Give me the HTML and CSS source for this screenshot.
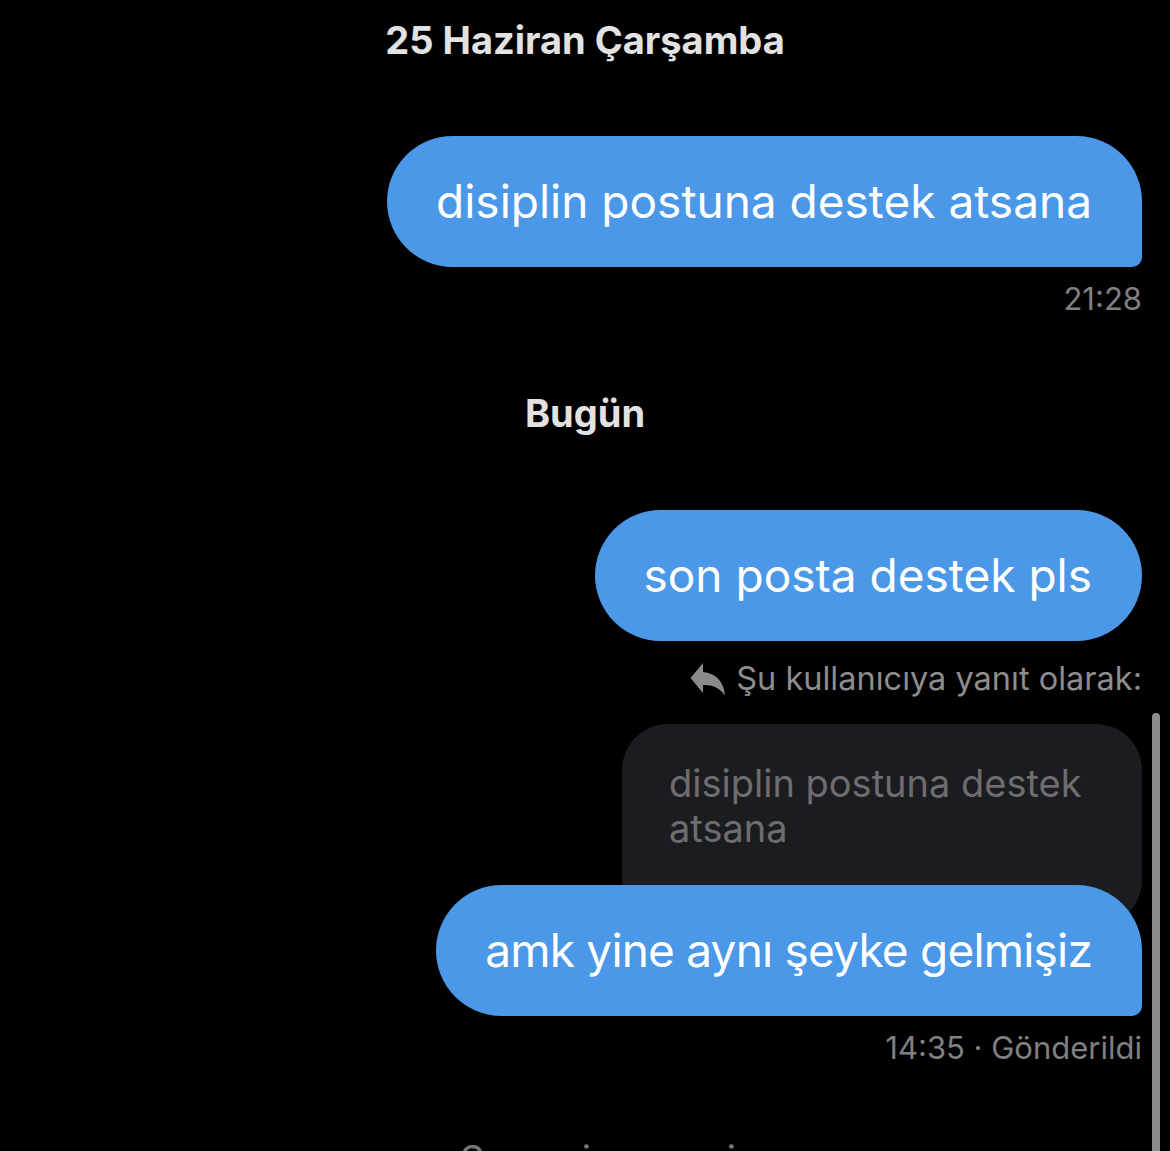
FILE: index.html
```html
<!DOCTYPE html>
<html>
  <head>
    <meta charset="UTF-8" />
    <meta name="viewport" content="width=device-width, initial-scale=1.0" />
    <title>Mesajlar</title>
    <link rel="stylesheet" href="styles.css">
  </head>
  <body>
    <div class="thread">
      <div class="day day-first">25 Haziran Çarşamba</div>

      <div class="msg">
        <div class="bubble tail">disiplin postuna destek atsana</div>
        <div class="meta">21:28</div>
      </div>

      <div class="day day-today">Bugün</div>

      <div class="msg">
        <div class="bubble">son posta destek pls</div>
        <div class="reply-label">
          <svg class="reply-icon" viewBox="0 0 36 34" width="36" height="34">
            <path d="M13 1 L0.5 16 L13 31 V23 C21 22.5 29 25 35 33.5 C34 20 26 11 13 10 Z" fill="#8a8a8a" />
          </svg>
          <span>Şu kullanıcıya yanıt olarak:</span>
        </div>
        <div class="quote">disiplin postuna destek atsana</div>
        <div class="bubble tail over">amk yine aynı şeyke gelmişiz</div>
        <div class="meta">14:35 · Gönderildi</div>
      </div>

      <div class="footer-hint">Seven ise sevsin</div>
    </div>
    <div class="scrollbar"></div>
  </body>
</html>
```

FILE: styles.css
```css
html, body {
  margin: 0;
  background: #000;
  height: 100%;
  overflow: hidden;
}
body {
  font-family: Inter, 'Noto Sans', sans-serif;
  position: relative;
}
.day {
  text-align: center;
  color: #e2e2e2;
  font-weight: 700;
  font-size: 38px;
  line-height: 46px;
}
.day-first {
  padding-top: 17px;
}
.day-today {
  margin-top: 71px;
  font-size: 38px;
}
.msg {
  display: flex;
  flex-direction: column;
  align-items: flex-end;
  padding-right: 28px;
}
.day-first + .msg {
  margin-top: 73px;
}
.day-today + .msg {
  margin-top: 74px;
}
.bubble {
  background: #4a98e7;
  color: #fff;
  font-size: 46px;
  line-height: 55px;
  padding: 38px 50px 38px 49px;
  border-radius: 66px;
  white-space: nowrap;
  position: relative;
}
.bubble.tail {
  border-bottom-right-radius: 10px;
}
.bubble.over {
  margin-top: -41px;
  letter-spacing: -0.8px;
}
.meta {
  color: #808080;
  font-size: 31px;
  line-height: 40px;
  margin-top: 12px;
}
.reply-label {
  display: flex;
  align-items: center;
  gap: 10px;
  color: #8d8d8d;
  font-size: 32.5px;
  line-height: 40px;
  margin-top: 18px;
}
.reply-icon {
  display: block;
}
.quote {
  background: #1b1c1f;
  color: #6d6d70;
  font-size: 38px;
  line-height: 45px;
  width: 426px;
  height: 165px;
  padding: 37px 47px 0 47px;
  border-radius: 46px;
  margin-top: 25px;
}
.footer-hint {
  color: #777;
  font-size: 38px;
  line-height: 46px;
  margin: 68px 0 0 460px;
}
.scrollbar {
  position: absolute;
  right: 10px;
  top: 713px;
  bottom: -10px;
  width: 8px;
  border-radius: 4px;
  background: #8c8c8c;
}
```
